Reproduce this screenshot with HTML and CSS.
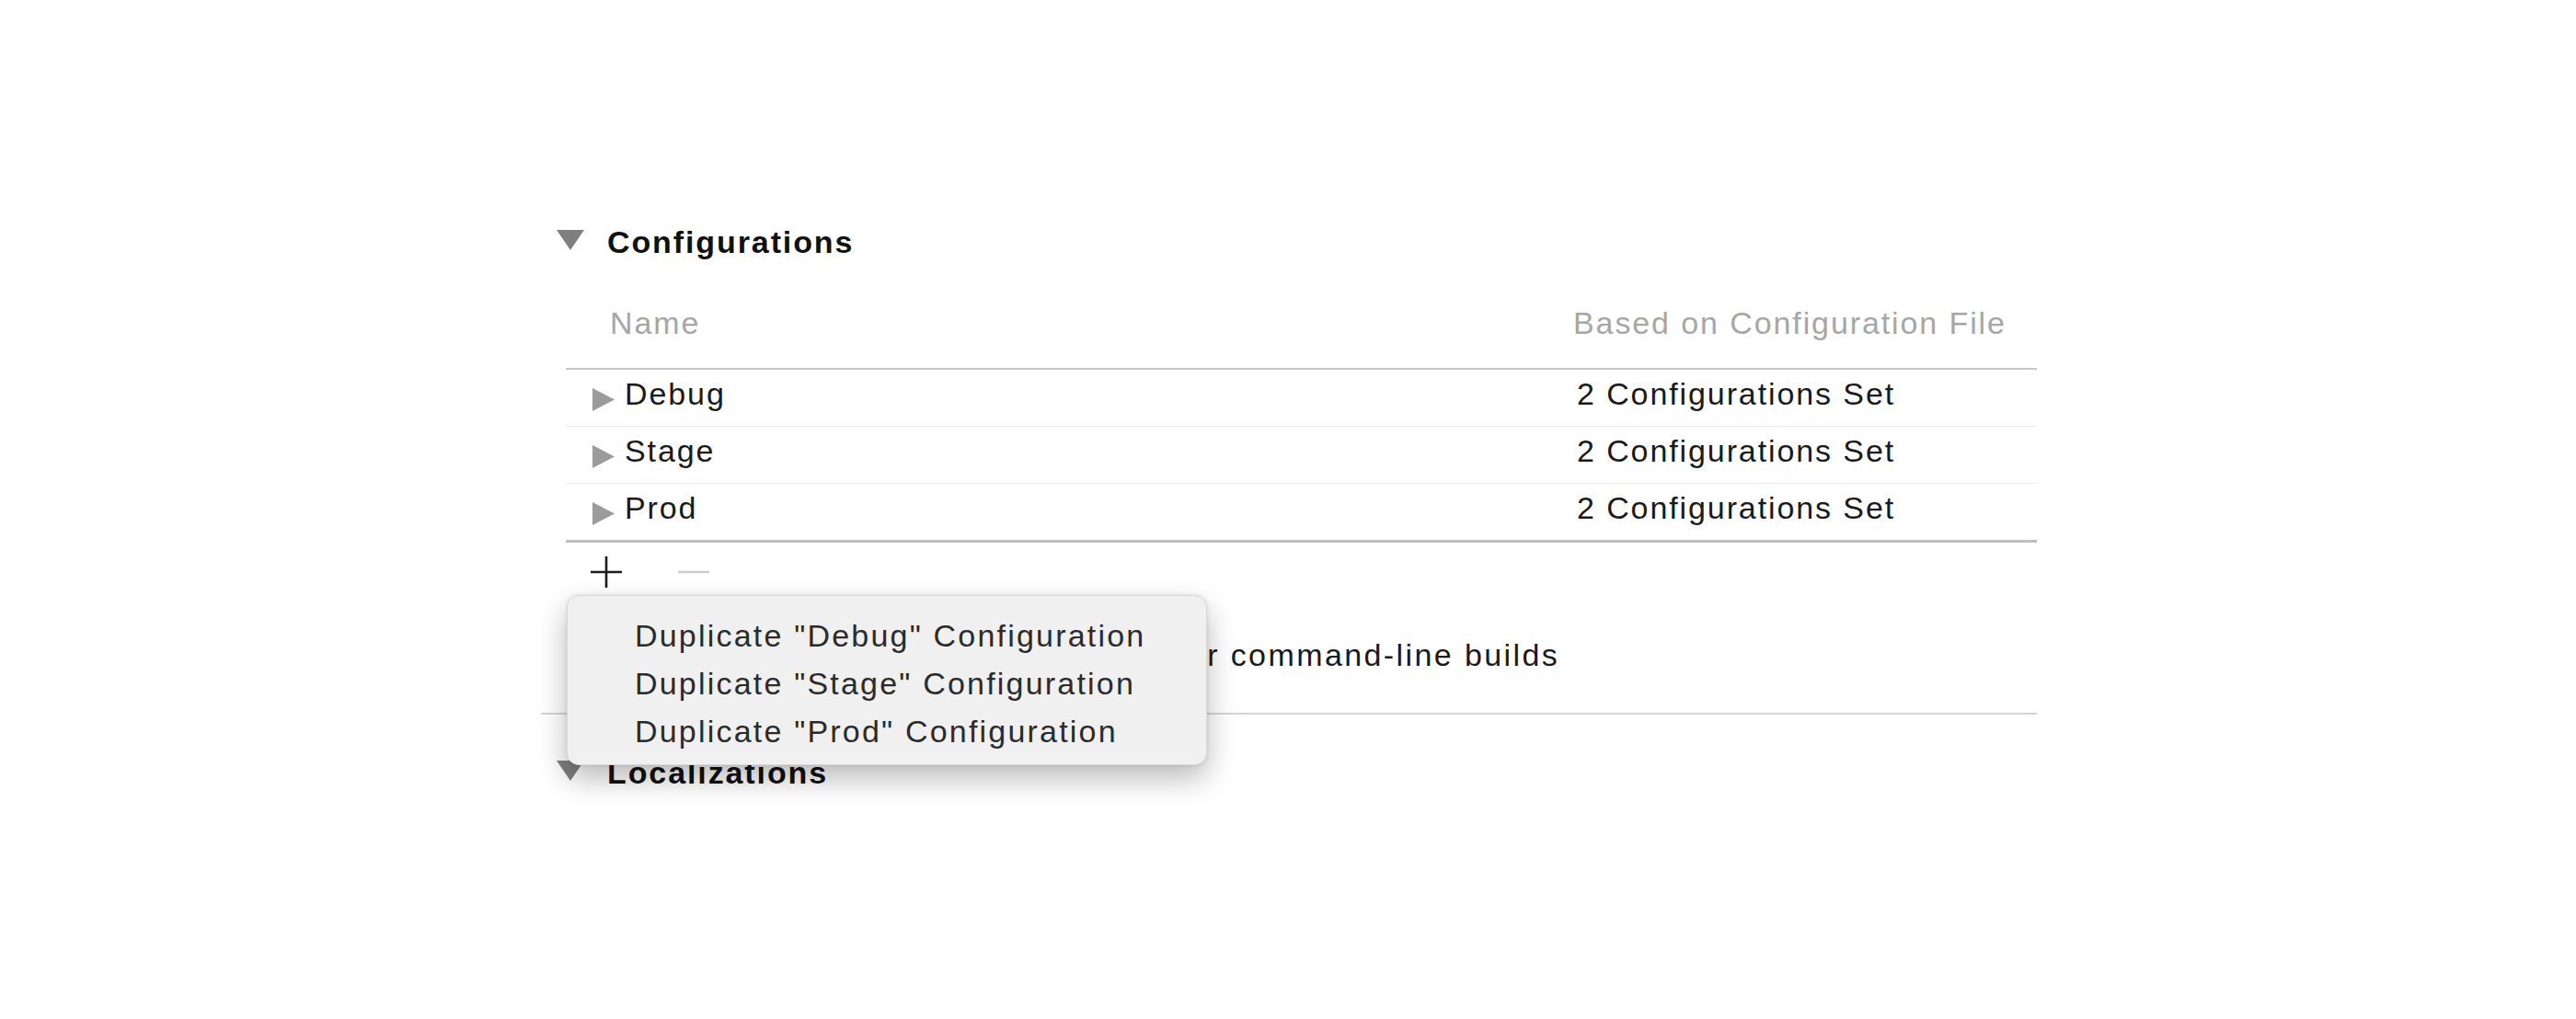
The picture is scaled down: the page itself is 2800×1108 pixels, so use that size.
FILE: index.html
```html
<!DOCTYPE html>
<html lang="en">
<head>
<meta charset="utf-8">
<title>Configurations</title>
<link rel="stylesheet" href="styles.css">
</head>
<body>
<div class="page">
  <div class="panel">
    <section class="section">
      <div class="section-header">
        <svg class="disclosure-open" width="30" height="22" viewBox="0 0 30 22"><polygon points="0,0 30,0 15,22"/></svg>
        <span class="section-title">Configurations</span>
      </div>

      <div class="table">
        <div class="table-head">
          <div class="head-name">Name</div>
          <div class="head-file">Based on Configuration File</div>
        </div>
        <div class="row">
          <div class="cell-name"><svg class="disclosure-closed" width="24" height="25" viewBox="0 0 24 25"><polygon points="0,0 24,12.5 0,25"/></svg><span>Debug</span></div>
          <div class="cell-file">2 Configurations Set</div>
        </div>
        <div class="row">
          <div class="cell-name"><svg class="disclosure-closed" width="24" height="25" viewBox="0 0 24 25"><polygon points="0,0 24,12.5 0,25"/></svg><span>Stage</span></div>
          <div class="cell-file">2 Configurations Set</div>
        </div>
        <div class="row row-last">
          <div class="cell-name"><svg class="disclosure-closed" width="24" height="25" viewBox="0 0 24 25"><polygon points="0,0 24,12.5 0,25"/></svg><span>Prod</span></div>
          <div class="cell-file">2 Configurations Set</div>
        </div>
      </div>

      <div class="toolbar">
        <button class="tool-btn" aria-label="Add"><svg width="36" height="36" viewBox="0 0 36 36"><path d="M18 1V35M1 18H35" class="plus-stroke"/></svg></button>
        <button class="tool-btn" aria-label="Remove" disabled><svg width="36" height="36" viewBox="0 0 36 36"><path d="M1 18H35" class="minus-stroke"/></svg></button>
      </div>

      <div class="option-row">
        <span class="option-label">for command-line builds</span>
      </div>
    </section>

    <div class="divider"></div>

    <section class="section">
      <div class="section-header">
        <svg class="disclosure-open" width="30" height="22" viewBox="0 0 30 22"><polygon points="0,0 30,0 15,22"/></svg>
        <span class="section-title">Localizations</span>
      </div>
    </section>

    <div class="popup-menu">
      <div class="menu-item">Duplicate "Debug" Configuration</div>
      <div class="menu-item">Duplicate "Stage" Configuration</div>
      <div class="menu-item">Duplicate "Prod" Configuration</div>
    </div>
  </div>
</div>
</body>
</html>
```

FILE: styles.css
```css
html, body {
  margin: 0;
  padding: 0;
  background: #ffffff;
}

body {
  width: 2800px;
  height: 1108px;
  overflow: hidden;
  font-family: "Liberation Sans", Arial, sans-serif;
  font-size: 34px;
  letter-spacing: 1.9px;
  color: #1a1a1a;
}

.page {
  width: 2800px;
  height: 1108px;
}

.panel {
  position: relative;
  margin-left: 588px;
  width: 1626px;
  padding-top: 243px;
}

.section-header {
  display: flex;
  align-items: center;
  height: 40px;
  line-height: 40px;
  padding-left: 17px;
}

.disclosure-open {
  fill: #7f7f7f;
  flex: none;
  margin-right: 25px;
  margin-top: -4px;
}

.section-title {
  font-weight: bold;
  color: #111111;
}

.table {
  margin-left: 27px;
  width: 1599px;
}

.table-head {
  display: grid;
  grid-template-columns: 1095px 1fr;
  padding-top: 48px;
  padding-bottom: 29px;
  line-height: 40px;
  color: #a6a6a6;
  border-bottom: 2px solid #c6c6c6;
}

.head-name {
  padding-left: 48px;
}

.row {
  display: grid;
  grid-template-columns: 1095px 1fr;
  box-sizing: border-box;
  height: 62px;
  padding-top: 6px;
  line-height: 40px;
  border-bottom: 1px solid #ececec;
}

.row-last {
  height: 64px;
  border-bottom: 3px solid #bfbfbf;
}

.cell-name {
  display: flex;
  align-items: flex-start;
  padding-left: 29px;
}

.disclosure-closed {
  fill: #9b9b9b;
  flex: none;
  margin-right: 11px;
  margin-top: 14px;
}

.cell-file {
  padding-left: 4px;
}

.toolbar {
  display: flex;
  align-items: center;
  height: 64px;
  padding-left: 53px;
  gap: 59px;
}

.tool-btn {
  display: block;
  width: 36px;
  height: 36px;
  padding: 0;
  margin: 0;
  border: 0;
  background: transparent;
}

.tool-btn svg {
  display: block;
}

.plus-stroke {
  stroke: #1c1c1c;
  stroke-width: 2.6;
  fill: none;
}

.minus-stroke {
  stroke: #cdcdcd;
  stroke-width: 2.6;
  fill: none;
}

.option-row {
  margin-top: 38px;
  height: 40px;
  line-height: 40px;
  padding-left: 691px;
  letter-spacing: 2.4px;
  white-space: nowrap;
}

.divider {
  margin-top: 43px;
  height: 2px;
  background: #d4d4d4;
  margin-bottom: 43px;
}

.popup-menu {
  position: absolute;
  left: 28px;
  top: 647px;
  box-sizing: border-box;
  width: 696px;
  height: 185px;
  padding-top: 17px;
  padding-left: 73px;
  background: #f0f0f0;
  border: 1px solid #d9d9d9;
  border-radius: 13px;
  box-shadow: 0 14px 32px rgba(0, 0, 0, 0.28), 0 0 4px rgba(0, 0, 0, 0.1);
  color: #2b2b2b;
  letter-spacing: 2.2px;
}

.menu-item {
  width: fit-content;
  height: 52px;
  line-height: 52px;
  white-space: nowrap;
}
```
